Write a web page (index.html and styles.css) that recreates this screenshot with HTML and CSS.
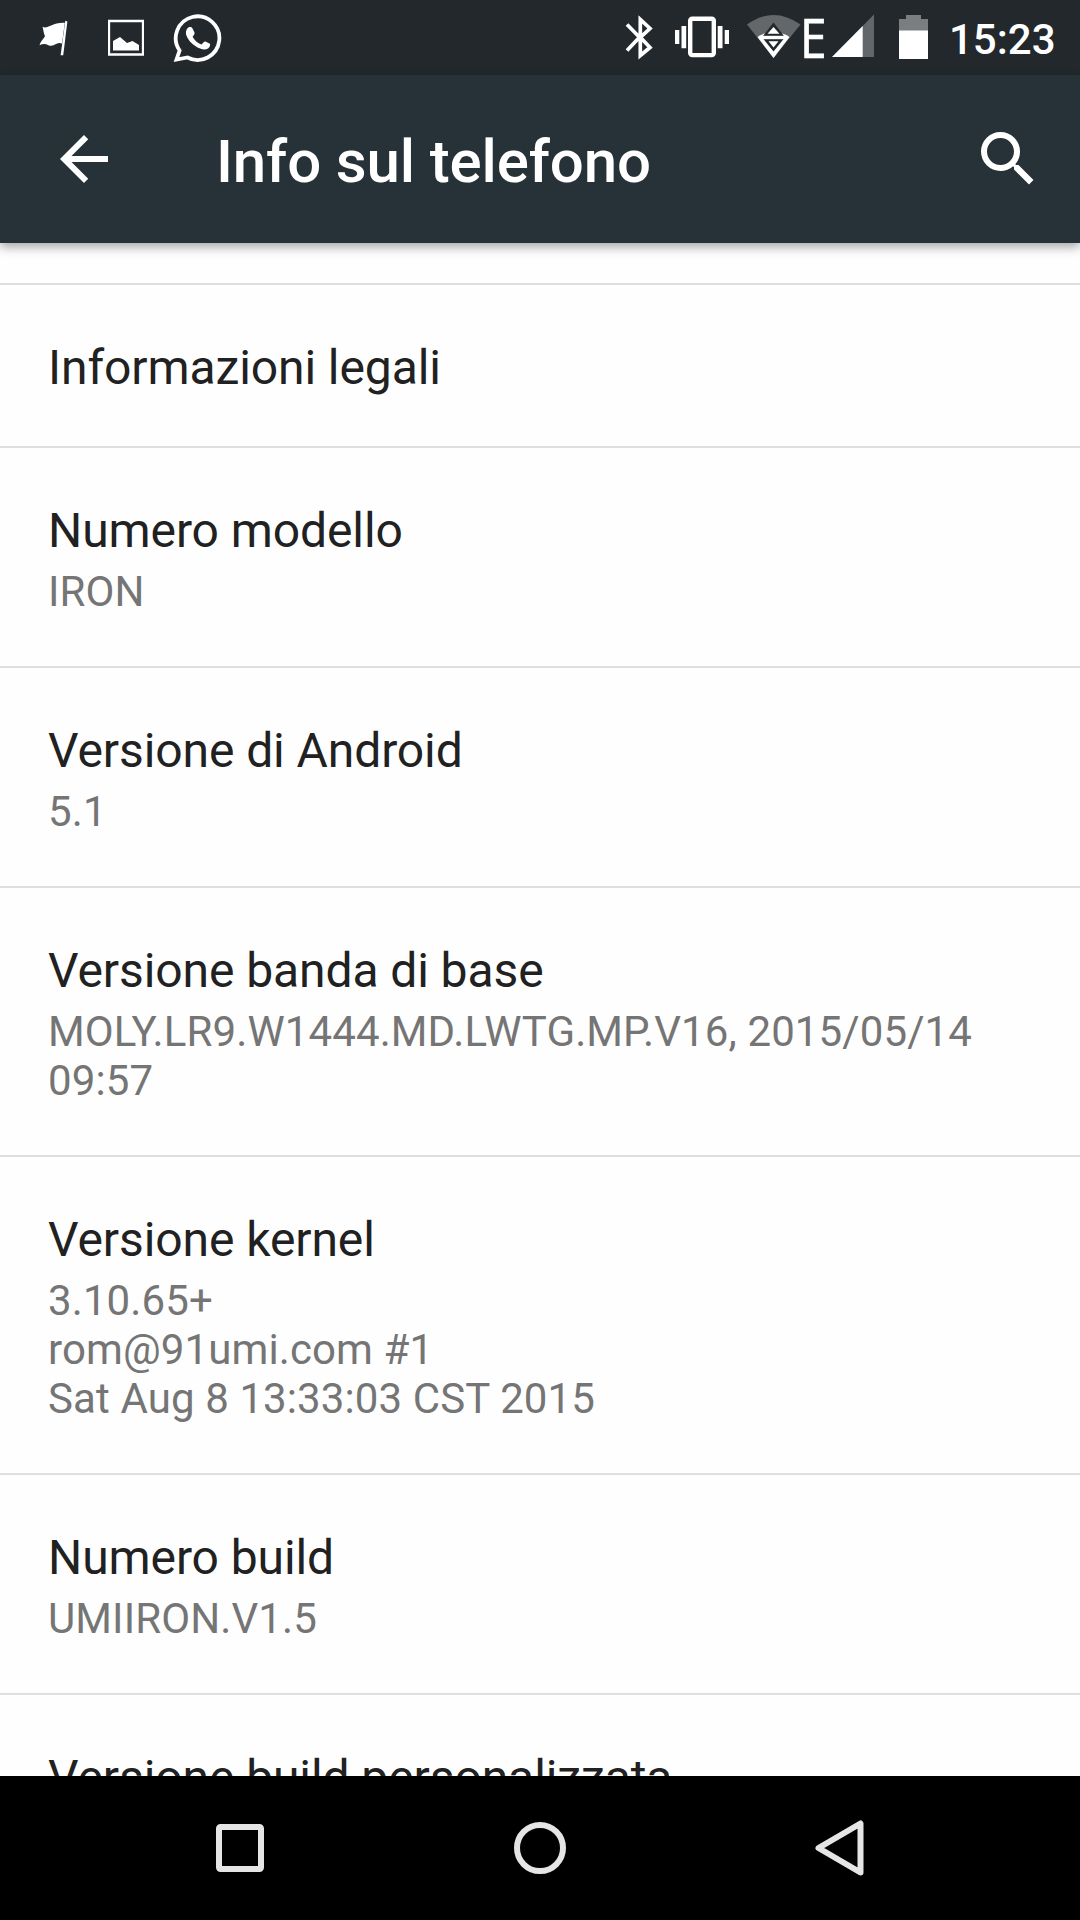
FILE: index.html
```html
<!DOCTYPE html>
<html lang="it">
<head>
<meta charset="utf-8">
<title>Info sul telefono</title>
<link rel="stylesheet" href="styles.css">
</head>
<body>
<div class="screen">
  <header class="status-bar">
    <div class="status-group">
      <svg class="flag" width="29" height="75" viewBox="39 0 29 75" fill="#fff"><path d="M42.5 26.8C47 30 52 22 64.8 22.8L62 43.500C56.500 41 53 48 48.500 45.200C45 43.500 42.500 44 39.500 45.200C40.500 41 43.500 39 45 36.200C43.500 33 43.500 30 42.500 26.800Z"/><path d="M65.300 20.800L67.400 21.500L63.200 55.200H60.600Z"/></svg>
      <svg class="picture" width="36" height="75" viewBox="108 0 36 75"><path d="M109 21H143V54.500H109Z" fill="none" stroke="#fff" stroke-width="2.300"/><path d="M113 41L120 37L127 43L132.500 41L139 45V50.500H113Z" fill="#fff"/></svg>
      <svg class="whatsapp" width="50" height="75" viewBox="173 0 50 75"><path d="M179.600 50.500A21.800 21.800 0 1 1 187.500 57.500L176.500 59.500Z" fill="none" stroke="#fff" stroke-width="3.800"/><path d="M187 29C188.500 26.500 191.500 26.500 192.500 28.500L194.500 32.500C195 34 193.500 35.500 192.600 36.800C194.500 40.500 197.500 43 201.500 44.600C203 43 204 41.200 205.500 41.400L209.500 43.500C211 44.500 209.500 47.500 208 48.500C204.500 50.500 200 49 196 46.500C191 43.500 187.500 39 186.200 35C185.600 32.500 186 30.500 187 29Z" fill="#fff"/></svg>
    </div>
    <div class="status-group">
      <svg class="bluetooth" width="30" height="75" viewBox="624 0 30 75"><path d="M627 24.500L639.500 37.300L627 50.500M640.300 37.300L650 47.500L640.300 55.500V19.500L650 28.500L640.300 37.300" fill="none" stroke="#fff" stroke-width="3.700"/></svg>
      <svg class="vibrate" width="56" height="75" viewBox="674 0 56 75"><rect x="690.200" y="18.700" width="23.600" height="36.400" rx="2" fill="none" stroke="#fff" stroke-width="4.400"/><path d="M675 30H679.300V44H675ZM681.500 26H686.200V48.300H681.500ZM717.700 26H722.500V48.300H717.700ZM724.700 30H729V44H724.700Z" fill="#fff"/></svg>
      <svg class="wifi" width="54" height="75" viewBox="747 0 54 75"><path d="M747 24.500Q773.500 5.500 800.500 24.500L773.500 58Z" fill="#63676a"/><path d="M757.500 37Q762 33.500 765.500 33.500H782Q786 34 789.500 37L773.500 58Z" fill="#fff"/><path d="M773.500 22.500L784 36H763ZM763 38.500H784L773.500 51.500Z" fill="#22282c"/><path d="M773.500 27L779.500 33.800H767.500ZM768.500 41.200H778.500L773.500 47.500Z" fill="#fff"/><path d="M759 37.500H788" stroke="#fff" stroke-width="3.400"/></svg>
      <span class="network">E</span>
      <svg class="signal" width="43" height="75" viewBox="832 0 43 75"><path d="M874 14.500V57H832Z" fill="#63676a"/><path d="M862.700 26V57H832Z" fill="#fff"/></svg>
      <svg class="battery" width="29" height="75" viewBox="899 0 29 75"><path d="M906 15H921V19H928V31H899V19H906Z" fill="#7a7e80"/><path d="M899 30.500H928V59H899Z" fill="#fff"/></svg>
      <span class="clock">15:23</span>
    </div>
  </header>
  <div class="app-bar">
    <svg width="72" height="72" viewBox="0 0 24 24" fill="#fff"><path d="M20 11H7.830L13.420 5.410L12 4L4 12L12 20L13.410 18.590L7.830 13H20Z"/></svg>
    <h1 class="app-title">Info sul telefono</h1>
    <svg width="72" height="72" viewBox="0 0 24 24" fill="#fff"><path d="M15.500 14h-.79l-.28-.27A6.470 6.470 0 0 0 16 9.500 6.500 6.500 0 1 0 9.500 16c1.610 0 3.090-.59 4.230-1.570l.27.280v.79l5 4.990L20.490 19l-4.990-5zm-6 0C7.010 14 5 11.990 5 9.500S7.010 5 9.500 5 14 7.010 14 9.500 11.990 14 9.500 14z"/></svg>
  </div>
  <main class="list">
    <section class="item"><h2 class="item-title">Informazioni legali</h2></section>
    <section class="item"><h2 class="item-title">Numero modello</h2><p class="item-summary">IRON</p></section>
    <section class="item"><h2 class="item-title">Versione di Android</h2><p class="item-summary">5.1</p></section>
    <section class="item"><h2 class="item-title">Versione banda di base</h2><p class="item-summary">MOLY.LR9.W1444.MD.LWTG.MP.V16, 2015/05/14 09:57</p></section>
    <section class="item"><h2 class="item-title">Versione kernel</h2><p class="item-summary">3.10.65+<br>rom@91umi.com #1<br>Sat Aug 8 13:33:03 CST 2015</p></section>
    <section class="item"><h2 class="item-title">Numero build</h2><p class="item-summary">UMIIRON.V1.5</p></section>
    <section class="item"><h2 class="item-title">Versione build personalizzata</h2></section>
  </main>
  <nav class="nav-bar">
    <svg width="60" height="60" viewBox="-30 -30 60 60"><rect x="-21" y="-21" width="42" height="42" rx="1.500"/></svg>
    <svg width="60" height="60" viewBox="-30 -30 60 60"><circle r="23"/></svg>
    <svg width="60" height="60" viewBox="-30 -30 60 60"><path d="M20.500 -24.500V24.500L-21.500 0Z" stroke-linejoin="round"/></svg>
  </nav>
</div>
</body>
</html>
```
FILE: styles.css
```css
* { box-sizing: border-box; }
body {
  margin: 0;
  font-family: Roboto, "Liberation Sans", sans-serif;
  background: #fefefe;
}
h1, h2, p { margin: 0; }
svg { display: block; flex: none; }

.screen {
  display: flex;
  flex-direction: column;
  width: 1080px;
  height: 1920px;
  overflow: hidden;
}

.status-bar {
  display: flex;
  justify-content: space-between;
  flex: none;
  height: 75px;
  padding: 0 25px 0 39px;
  background: #22282c;
  color: #fff;
}
.status-group { display: flex; }
.picture { margin-left: 40px; }
.whatsapp { margin-left: 29px; }
.vibrate { margin-left: 20px; }
.wifi { margin-left: 17px; }
.network {
  width: 32px;
  margin-left: -1px;
  font: 400 55px/73px "Open Sans", sans-serif;
  -webkit-text-stroke: .7px #fff;
  transform: scaleX(.87);
  transform-origin: 0 0;
}
.battery { margin-left: 24px; }
.clock {
  width: 106px;
  margin-left: 21px;
  font-size: 42px;
  font-weight: 500;
  line-height: 79px;
  white-space: nowrap;
}

.app-bar {
  display: flex;
  align-items: center;
  flex: none;
  height: 168px;
  padding: 0 36px 0 48px;
  background: #273238;
  color: #fff;
  box-shadow: 0 4px 10px rgba(0, 0, 0, .35);
  z-index: 1;
}
.app-title {
  flex: 1;
  margin-left: 96px;
  padding-top: 5px;
  font-size: 60px;
  font-weight: 500;
  line-height: 70px;
  letter-spacing: -.14px;
}

.list {
  flex: 1;
  min-height: 0;
  padding-top: 40px;
  overflow: hidden;
}
.item {
  padding: 54px 48px 50px;
  border-top: 2px solid #dfdfdf;
}
.item-title {
  font-size: 48px;
  font-weight: 400;
  line-height: 57px;
  letter-spacing: -.09px;
  color: #212121;
}
.item-summary {
  margin-top: 8px;
  font-size: 42px;
  line-height: 49px;
  letter-spacing: .11px;
  color: #757575;
}

.nav-bar {
  display: flex;
  justify-content: center;
  align-items: center;
  gap: 240px;
  flex: none;
  height: 144px;
  background: #000;
}
.nav-bar svg {
  fill: none;
  stroke: #e5e5e5;
  stroke-width: 6;
}
```
